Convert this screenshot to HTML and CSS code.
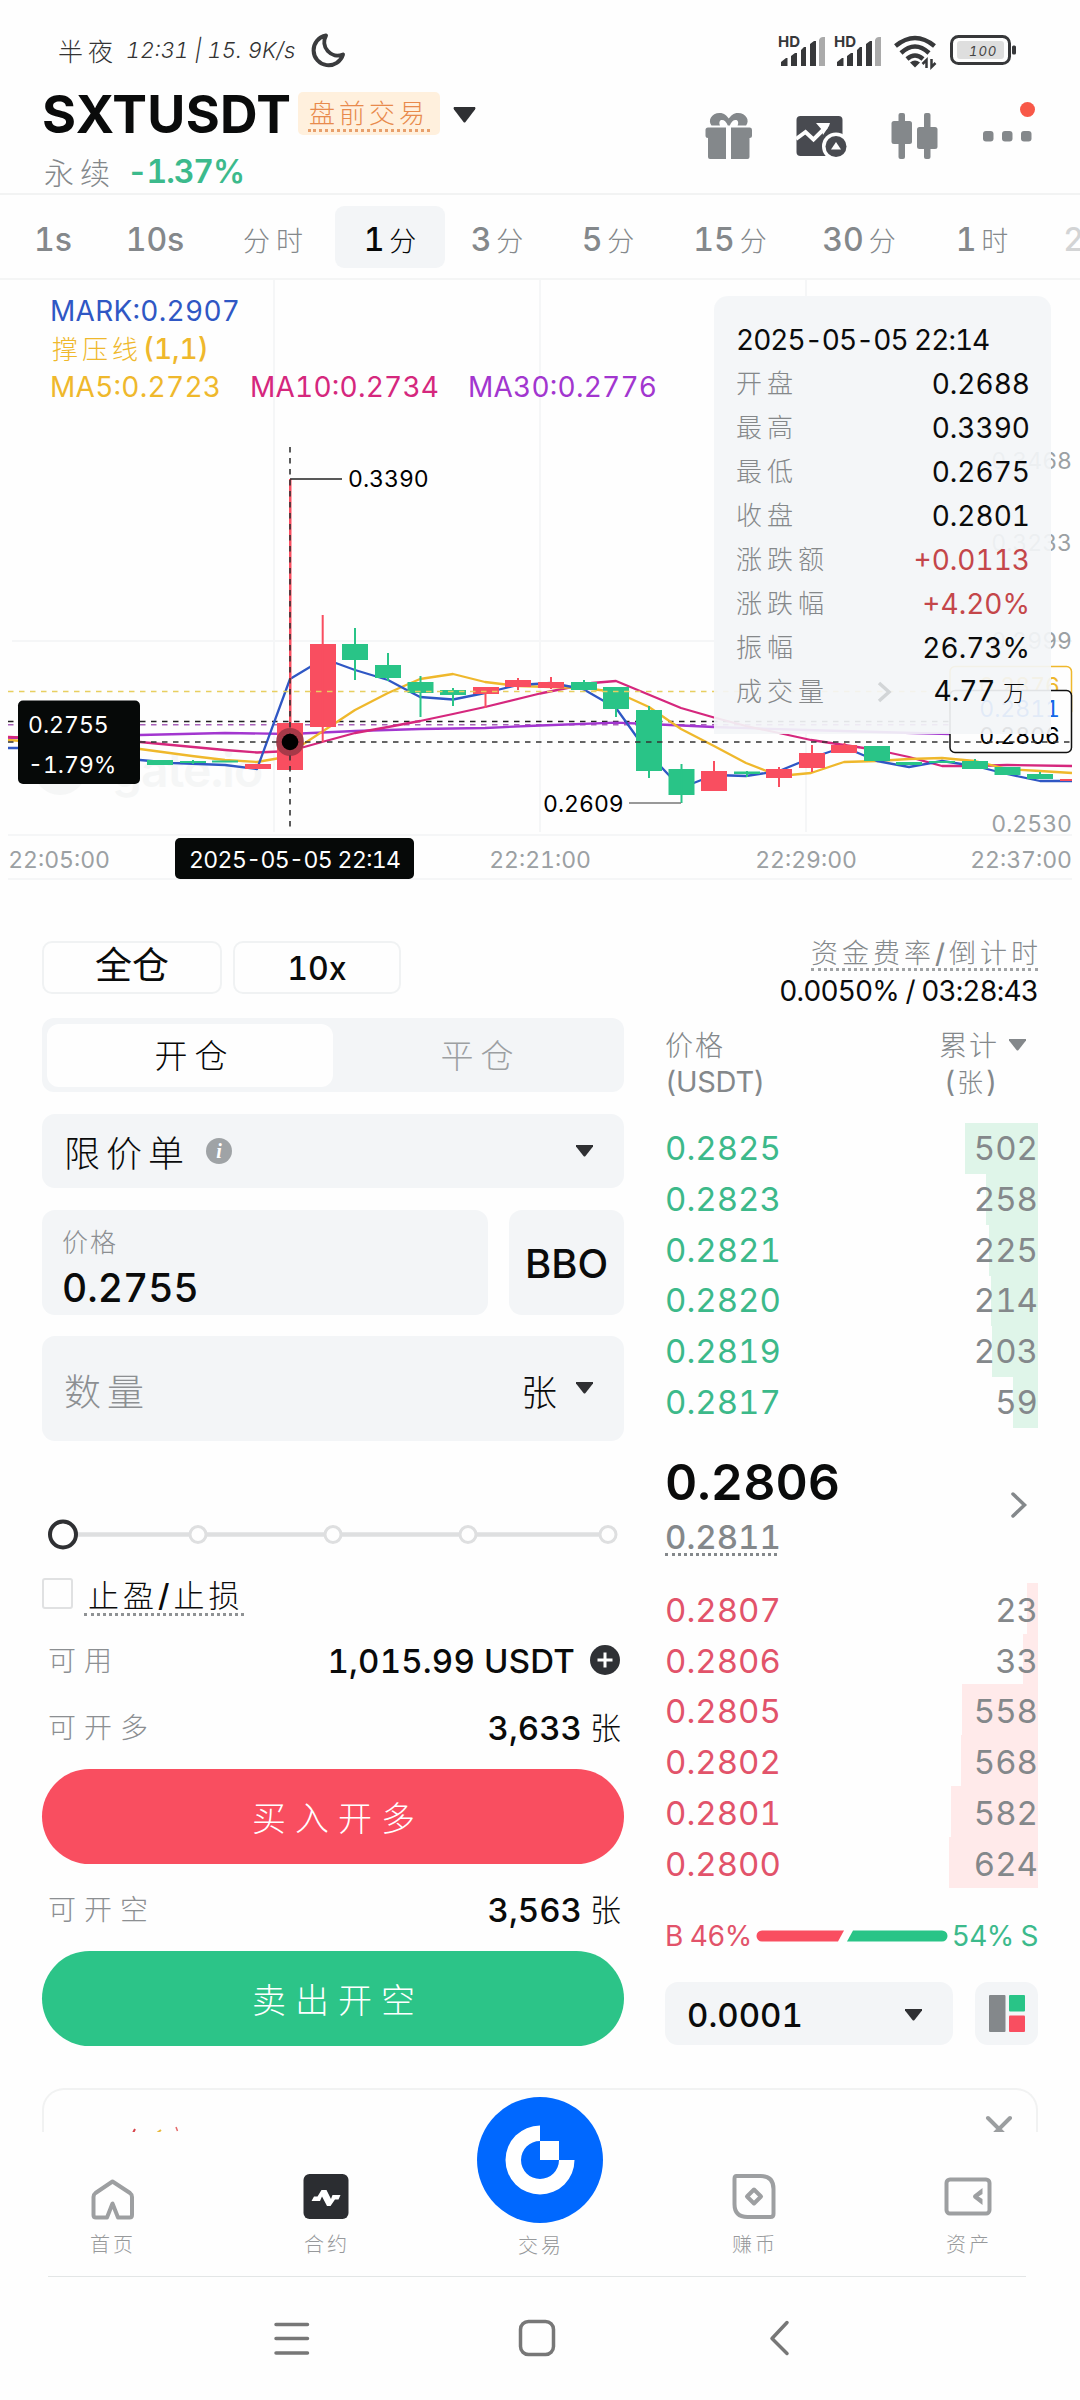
FILE: index.html
```html
<!DOCTYPE html>
<html lang="zh-CN">
<head>
<meta charset="utf-8">
<title>SXTUSDT 永续</title>
<link rel="stylesheet" href="styles.css">
</head>
<body>
<div class="status">
  <span class="status-text">半夜</span><span class="status-time">12:31 | 15. 9K/s</span>
  <svg class="moon" width="36" height="36" viewBox="310 32 36 36"><path d="M326 35.5A15 15 0 1 0 343 54.500A13.500 13.500 0 0 1 326 35.500Z" fill="none" stroke="#3a3b3d" stroke-width="4" stroke-linejoin="round"/></svg>
  <svg class="status-icons" width="250" height="44" viewBox="775 28 250 44">
    <g id="sig" fill="#37383a">
      <text x="778" y="47" class="hd">HD</text>
      <path d="M781 66v-4l5-4h1.500v8zM791 66V56l4-3h2v13zM801 66V50l3-3h2v19zM810 66V44l4-3h2v25z"/>
      <path d="M819 66V40q1-3 4-3h2v29z" fill="#aaa"/>
    </g>
    <use href="#sig" x="56"/>
    <g fill="none" stroke="#37383a" stroke-width="4.500">
      <path d="M895.500 46Q915 30 934.500 46M901 53Q915 40 929 53M907 59Q915 52 923 59"/>
    </g>
    <path d="M910 62.500q5-4 10 0l-5 5z" fill="#37383a"/>
    <path d="M926.500 68v-8l-4 4M931.500 59v8l4-4" stroke="#37383a" stroke-width="2.500" fill="none"/>
    <rect x="951.500" y="36.500" width="58" height="27" rx="7" fill="none" stroke="#37383a" stroke-width="3"/>
    <rect x="957" y="41" width="47" height="18" rx="3" fill="#dedede"/>
    <text x="969" y="55.500" class="bat">100</text>
    <rect x="1012" y="45.500" width="4" height="9" rx="1.500" fill="#37383a"/>
  </svg>
</div>

<header class="head">
  <div>
    <div class="name-row">
      <h1>SXTUSDT</h1>
      <span class="badge"><span>盘前交易</span></span>
      <svg width="23" height="16" viewBox="0 0 23 16"><path d="M1 0h21q1 1 0 2.500L12.500 15q-1 1-2 0L1 2.500Q0 1 1 0z" fill="#2f3033"/></svg>
    </div>
    <div class="sub-row"><span class="perp">永续</span><b>-1.37%</b></div>
  </div>
  <svg class="head-icons" width="345" height="70" viewBox="700 95 345 70">
    <g fill="#84888b">
      <path d="M706 127.500h20V159h-16q-2 0-2-2v-19q-2.500 0-2.500-2.500V130q0-2.500 2.500-2.500zM731 127.500h19q2 0 2 2.500v5.500q0 2.500-2.500 2.500v19q0 2-2 2H731z"/>
      <path d="M711.500 125.500c-4-5 0-12.500 8-12.500 5 0 7 2.500 9.300 5.500 2.300-3 4.300-5.500 9.300-5.500 8 0 12 7.500 8 12.500h-8.500c1.500-3.500 0-5.500-2-5.500-2.500 0-4.500 2-5.800 5.500h-2c-1.300-3.500-3.300-5.500-5.800-5.500-2 0-3.500 2-2 5.500z"/>
      <rect x="891.500" y="121" width="20.500" height="23" rx="2.500"/><rect x="898.500" y="113" width="6.500" height="46" rx="2"/>
      <rect x="917" y="127" width="20.500" height="22" rx="2.500"/><rect x="924" y="113" width="6.500" height="46" rx="2"/>
      <rect x="983" y="131" width="10.500" height="10.500" rx="3"/><rect x="1002" y="131" width="10.500" height="10.500" rx="3"/><rect x="1021" y="131" width="10.500" height="10.500" rx="3"/>
    </g>
    <rect x="796.500" y="116" width="46" height="40" rx="4" fill="#484a50"/>
    <path d="M796 139l9.500-7 8 7.500 13-13" fill="none" stroke="#fefefe" stroke-width="4"/><path d="M816 123h14l-1 3-6 9-1-5z" fill="#fefefe"/>
    <circle cx="836" cy="146.500" r="14" fill="#fefefe"/><circle cx="836" cy="146.500" r="10.500" fill="#484a50"/>
    <path d="M836 142l5 7.500h-10z" fill="#fefefe"/>
    <circle cx="1027.500" cy="109.500" r="7.500" fill="#f85848"/>
  </svg>
</header>

<nav class="tabs">
  <span>1s</span><span>10s</span><span><i class="line">分时</i></span><span class="on">1<i>分</i></span><span>3<i>分</i></span><span>5<i>分</i></span><span>15<i>分</i></span><span>30<i>分</i></span><span>1<i>时</i></span><span class="fade">2</span>
</nav>

<section class="chart">
  <svg width="1080" height="600" viewBox="0 280 1080 600">
    <g stroke="#f5f6f7" stroke-width="2" fill="none">
      <path d="M274 280V832M540 280V832M806 280V832M12 641H1072M8 835H1072M8 879H1072"/>
    </g>
    <g fill="#f5f6f6"><circle cx="60" cy="768" r="27"/><text x="112" y="787" class="mark">gate.io</text></g>
    <g fill="none" stroke-dasharray="5.500 5.500" stroke-width="1.500">
      <path d="M8 721.500H1072" stroke="#222"/><path d="M8 724.800H1072" stroke="#a860b8"/>
    </g>
    <g fill="none" stroke-width="2.300" stroke-linejoin="round">
      <path stroke="#a236cf" d="M8 738L140 735 225 733 290 734 355 731 420 729 485 728 540 725.500 616 722.700 649 724 714 727 806 730 950 734 1072 736"/>
      <path stroke="#d5277d" d="M8 737L140 742 225 750 257 752.500 290 751 322 742 355 733 388 727 420 721 453 714 485 707 540 693.500 592 683 616 681 681 708 714 717.500 746 726 779 733 811 740 844 745 877 750 909 757 942 766 975 766 1007 765 1072 766"/>
      <path stroke="#efb82c" d="M8 740L140 749 192 756 225 760 257 762 280 758 305 743 355 710 388 693 420 679 453 674 485 682 518 686 551 687 583 688 616 692 649 707 681 729 714 746 746 763 779 776 811 773 844 762 877 761 909 759 942 758 975 761 1007 769 1040 771 1072 773"/>
      <path stroke="#2f57c4" d="M8 748H18L140 760 173 763 225 765 257 769 290 679 310 667 322 658 355 670 388 680 420 697 453 699.500 485 693 518 685 551 683 583 689 616 708 649 754 681 788 714 775 746 776 779 771 811 758 844 747 877 761 909 767 942 761 975 766 1007 774 1040 781 1072 781"/>
    </g>
    <g fill="#29c487">
      <path d="M147 760h26v5h-26zM180 761h26v2h-26zM212 760.500h26v2h-26zM342 644h26v16h-26zM375 665h26v13h-26zM407.500 682h26v11h-26zM440 690h26v5h-26zM571 682h26v8h-26zM603 687h26v22h-26zM636 710h26v61h-26zM668.500 769h26v26h-26zM734 771.500h26v2.500h-26zM864 746h26v15h-26zM896 762h26v3h-26zM929 761h26v2h-26zM962 761h26v8h-26zM994.500 767h26v8h-26zM1027 774h26v5h-26z"/>
      <path d="M354 628h2v52h-2zM387 653h2v28h-2zM419.500 676h2v41h-2zM452 688h2v18h-2zM583 680h2v3h-2zM615 705h2v12h-2zM648 706h2v72h-2zM680.500 764h2v39h-2zM192 760h2v4h-2zM746 771h2v6h-2zM974 759h2v4h-2zM1039 772h2v4h-2z"/>
    </g>
    <g fill="#f94e60">
      <path d="M245 764h26v5h-26zM277 723h26v47h-26zM310 644h26v83h-26zM473 687h26v7h-26zM505 680h26v7h-26zM538 682h26v6h-26zM701 771h26v20h-26zM766 769h26v9h-26zM799 753h26v15h-26zM831 745h26v8h-26zM1060 779h12v2h-12z"/>
      <path d="M289 479h2.500v250h-2.500zM321.700 615h2v127h-2zM484.500 690h2v18h-2zM517 678h2v12h-2zM550 677h2v12h-2zM713 761h2v12h-2zM778 767h2v20h-2zM811 745h2v27h-2zM843.500 743h2v4h-2z"/>
    </g>
    <path d="M8 691.500H1072" fill="none" stroke="#e8cf60" stroke-width="1.500" stroke-dasharray="5.500 5.500"/>
    <path d="M290 479H342" stroke="#222" stroke-width="1.500"/><path d="M629 803H681" stroke="#777" stroke-width="1.500"/>
    <g class="axis" text-anchor="end">
      <text x="1072" y="469">0.3468</text><text x="1072" y="551">0.3233</text><text x="1072" y="649">0.2999</text><text x="1072" y="832">0.2530</text>
      <text x="1072" y="868">22:37:00</text><text x="857" y="868">22:29:00</text><text x="591" y="868">22:21:00</text><text x="110" y="868">22:05:00</text>
    </g>
    <g fill="#fefefe"><rect x="950" y="666.500" width="121.500" height="50" rx="5" stroke="#efb82c" stroke-width="1.500"/><text x="1060" y="694" text-anchor="end" class="val" fill="#efb82c">0.2876</text>
    <rect x="950" y="690.500" width="121.500" height="62" rx="5" stroke="#111" stroke-width="1.500"/></g>
    <text x="1060" y="717" text-anchor="end" class="val" fill="#1467e8">0.2811</text><text x="1060" y="744" text-anchor="end" class="val">0.2806</text>
    <path d="M8 742H1072M290 447V831" stroke="#333" stroke-width="1.600" stroke-dasharray="5.500 5.500" fill="none"/>
    <circle cx="290" cy="742" r="14" fill="#8b3340" opacity=".75"/><circle cx="290" cy="742" r="8.300"/>
    <text x="348" y="487" class="val">0.3390</text><text x="543" y="812" class="val">0.2609</text>
    <rect x="18" y="700.500" width="122" height="83.500" rx="5" fill="#060908"/><rect x="175" y="838" width="239" height="41" rx="5" fill="#060908"/>
    <g fill="#fff"><text x="28" y="733" class="val">0.2755</text><text x="28" y="773" class="val">-1.79%</text><text x="189" y="868" class="val" textLength="212">2025-05-05 22:14</text></g>
    <g class="leg">
      <text x="50" y="321" fill="#2f57c4" textLength="190">MARK:0.2907</text>
      <text x="52" y="359" fill="#efb82c" class="sr">撑压线<tspan x="143" class="par">(1,1)</tspan></text>
      <text x="50" y="397" fill="#efb82c" textLength="171">MA5:0.2723</text><text x="250" y="397" fill="#d5277d" textLength="189">MA10:0.2734</text><text x="468" y="397" fill="#a236cf" textLength="189">MA30:0.2776</text>
    </g>
  </svg>
  <div class="tip">
    <div class="tip-date">2025-05-05 22:14</div>
    <div><i>开盘</i><span>0.2688</span></div>
    <div><i>最高</i><span>0.3390</span></div>
    <div><i>最低</i><span>0.2675</span></div>
    <div><i>收盘</i><span>0.2801</span></div>
    <div><i>涨跌额</i><span class="up">+0.0113</span></div>
    <div><i>涨跌幅</i><span class="up">+4.20%</span></div>
    <div><i>振幅</i><span>26.73%</span></div>
    <div><i class="vol">成交量</i><svg width="16" height="22" viewBox="0 0 16 22"><path d="M3 2l10 9-10 9" fill="none" stroke="#d2d5d7" stroke-width="3.500"/></svg><span class="last">4.77 <em>万</em></span></div>
  </div>
</section>

<main class="trade">
  <section class="form">
    <div class="chips"><span class="cross">全仓</span><span class="lev">10x</span></div>
    <div class="seg"><span class="on">开仓</span><span>平仓</span></div>
    <div class="field select"><span class="lg">限价单</span><span class="info">i</span><svg class="caret" width="17" height="12" viewBox="0 0 17 12"><path d="M0 0h17v1.500L9.500 11q-1 1-2 0L0 1.500z"/></svg></div>
    <div class="price-row">
      <div class="field price"><span class="lbl">价格</span><span class="num">0.2755</span></div>
      <div class="field bbo">BBO</div>
    </div>
    <div class="field qty"><span class="ph">数量</span><span class="unit">张</span><svg class="caret" width="17" height="12" viewBox="0 0 17 12"><path d="M0 0h17v1.500L9.500 11q-1 1-2 0L0 1.500z"/></svg></div>
    <svg class="slider" width="582" height="36" viewBox="42 1516 582 36">
      <path d="M70 1534.500H606" stroke="#dedfe0" stroke-width="4.500"/>
      <g fill="#fefefe" stroke="#dedfe0" stroke-width="3"><circle cx="198" cy="1534.500" r="8"/><circle cx="333" cy="1534.500" r="8"/><circle cx="468" cy="1534.500" r="8"/><circle cx="608" cy="1534.500" r="8"/></g>
      <circle cx="63" cy="1534.500" r="13" fill="#fefefe" stroke="#2f3033" stroke-width="4"/>
    </svg>
    <div class="tpsl"><span class="box"></span><span class="dotted">止盈<b>/</b>止损</span></div>
    <div class="row avail"><i>可用</i><span class="amt">1,015.99 USDT</span><svg width="32" height="32" viewBox="0 0 32 32"><circle cx="16" cy="15" r="15" fill="#2f3135"/><path d="M16 7.500v15M8.500 15h15" stroke="#fff" stroke-width="3"/></svg></div>
    <div class="row max"><i>可开多</i><span>3,633</span><em>张</em></div>
    <button class="buy">买入开多</button>
    <div class="row max2"><i>可开空</i><span>3,563</span><em>张</em></div>
    <button class="sell">卖出开空</button>
  </section>

  <section class="book">
    <div class="fund"><span>资金费率<b>/</b>倒计时</span></div>
    <div class="fund-val">0.0050% / 03:28:43</div>
    <div class="cols"><div><i>价格</i><br>(USDT)</div><div class="acc"><i>累计</i><svg width="17" height="12" viewBox="0 0 17 12"><path d="M0 0h17v1.500L9.500 11q-1 1-2 0L0 1.500z" fill="#84888b"/></svg><br><span>(<i class="zh">张</i>)</span></div></div>
    <div class="rows green">
      <div><span>0.2825</span><s style="width:73px"></s><span>502</span></div>
      <div><span>0.2823</span><s style="width:52px"></s><span>258</span></div>
      <div><span>0.2821</span><s style="width:49px"></s><span>225</span></div>
      <div><span>0.2820</span><s style="width:47px"></s><span>214</span></div>
      <div><span>0.2819</span><s style="width:46px"></s><span>203</span></div>
      <div><span>0.2817</span><s style="width:25px"></s><span>59</span></div>
    </div>
    <div class="mid"><div><div class="last-price">0.2806</div><span class="idx">0.2811</span></div>
      <svg width="18" height="28" viewBox="0 0 18 28"><path d="M3 3l11.500 11L3 25" fill="none" stroke="#84888b" stroke-width="3.500" stroke-linecap="round"/></svg></div>
    <div class="rows red">
      <div><span>0.2807</span><s style="width:11px"></s><span>23</span></div>
      <div><span>0.2806</span><s style="width:15px"></s><span>33</span></div>
      <div><span>0.2805</span><s style="width:76px"></s><span>558</span></div>
      <div><span>0.2802</span><s style="width:77px"></s><span>568</span></div>
      <div><span>0.2801</span><s style="width:87px"></s><span>582</span></div>
      <div><span>0.2800</span><s style="width:89px"></s><span>624</span></div>
    </div>
    <div class="ratio"><span class="r">B 46%</span><svg width="192" height="12" viewBox="0 0 192 12"><path d="M6 .5H88L82 11.500H6A5.500 5.500 0 0 1 6 .5z" fill="#f94e60"/><path d="M97 .5H186a5.500 5.500 0 0 1 0 11H91z" fill="#29c487"/></svg><span class="g">54% S</span></div>
    <div class="prec"><div class="field step">0.0001<svg class="caret" width="17" height="12" viewBox="0 0 17 12"><path d="M0 0h17v1.500L9.500 11q-1 1-2 0L0 1.500z"/></svg></div>
      <div class="field lay"><svg width="36" height="37" viewBox="0 0 36 37"><rect width="16.500" height="37" rx="1" fill="#84888b"/><rect x="20" width="16" height="16.500" rx="1" fill="#29c487"/><rect x="20" y="20.500" width="16" height="16.500" rx="1" fill="#f94e60"/></svg></div></div>
  </section>
</main>

<div class="sheet">
  <svg width="996" height="44" viewBox="42 2088 996 44"><path d="M132.500 2134l2.500-5" stroke="#d8434a" stroke-width="2"/><path d="M157 2133l4-3" stroke="#e9b93d" stroke-width="2"/><path d="M176 2127l1.500 4" stroke="#e56a6a" stroke-width="1.500"/><path d="M988 2118l24 24M1010 2118l-24 24" stroke="#9b9ea0" stroke-width="4" stroke-linecap="round"/></svg>
</div>

<nav class="bottom">
  <div><svg width="48" height="48" viewBox="87 2173 48 48"><path d="M111.500 2181.500L129 2193q2 1.500 2 4v18q0 2.500-2.500 2.500H117l-5.500-14-5.500 14H95q-2.500 0-2.500-2.500v-18q0-2.500 2-4z" fill="none" stroke="#9d9fa1" stroke-width="4" stroke-linejoin="round"/></svg><i>首页</i></div>
  <div><svg width="48" height="48" viewBox="301.500 2173 48 48"><rect x="303" y="2174" width="45" height="45" rx="6" fill="#2b2d31"/><path d="M311 2201l2.500-4.500h3.500l4-6.500h5l4.500 9 1.500-4h8l-2 4.500h-3.500l-4.500 6.500h-3.500l-5-9.500-2 4.500z" fill="#fff"/></svg><i>合约</i></div>
  <div class="center"><svg class="fab" width="126" height="126" viewBox="-63 -63 126 126"><circle r="63" fill="#0068ff"/><path d="M0-34.500A34.500 34.500 0 1 0 34.500 0H19A19 19 0 1 1 0-19z" fill="#fff"/><rect y="-19" width="19" height="19" fill="#fff"/></svg><i>交易</i></div>
  <div><svg width="48" height="48" viewBox="729.500 2173 48 48"><path d="M736 2176h24q13 0 13 13v25q0 3-3 3h-23q-13 0-13-13v-25q0-3 2-3z" fill="none" stroke="#9d9fa1" stroke-width="4"/><path d="M753.500 2189.500l7 7-7 7-7-7z" fill="none" stroke="#9d9fa1" stroke-width="4" stroke-linejoin="round"/></svg><i>赚币</i></div>
  <div><svg width="48" height="48" viewBox="943.500 2173 48 48"><rect x="946" y="2179.500" width="43" height="34" rx="3.500" fill="none" stroke="#9d9fa1" stroke-width="4"/><path d="M982 2188v6l-4 2.500 4 2.500v6l-9-7q-1-1.500 0-3z" fill="#9d9fa1"/></svg><i>资产</i></div>
</nav>

<div class="sys">
  <svg width="1080" height="60" viewBox="0 2308 1080 60" fill="none" stroke="#777" stroke-width="3.500" stroke-linecap="round" stroke-linejoin="round"><path d="M276 2324.500H307.500M276 2338.500H307.500M276 2353H307.500"/><rect x="520.500" y="2321.500" width="33" height="33" rx="8"/><path d="M787 2322.500L772 2338.500 787 2353.500"/></svg>
</div>
</body>
</html>
```
FILE: styles.css
```css
* { box-sizing: border-box; }
body {
  margin: 0; width: 1080px; height: 2400px; overflow: hidden;
  background: #fefefe; color: #0a0b0b;
  font-family: Inter, "Noto Sans CJK SC", sans-serif;
  font-feature-settings: "tnum";
}
svg { display: block; flex: none; }
i, em { font-style: normal; font-weight: 300; }

.status { height: 78px; padding: 22px 55px 0 58px; display: flex; align-items: center; color: #333; }
.status-text { font-size: 25px; font-weight: 300; letter-spacing: 5px; }
.status-time { font-size: 22px; font-weight: 300; font-style: italic; width: 184px; white-space: nowrap; margin-left: 8px; }
.moon { margin-left: 0; }
.status-icons { margin-left: auto; }
.hd { font-size: 15px; font-weight: 700; }
.bat { font-size: 13px; font-style: italic; letter-spacing: 1px; fill: #444; }

.head { height: 117px; padding: 12px 35px 0 42px; border-bottom: 2px solid #f2f3f3; display: flex; justify-content: space-between; }
.head-icons { margin-top: 5px; }
.name-row { display: flex; align-items: center; height: 50px; }
.name-row h1 { margin: 0; font-size: 52px; font-weight: 700; line-height: 50px; width: 256px; letter-spacing: 0.3px; }
.badge { width: 142px; height: 43px; margin-right: 13px; border-radius: 5px; background: #fff0dd; color: #e88a4c; padding: 6px 10px 0; text-align: center; margin-top: -4px; }
.badge span { display: block; font-size: 26px; font-weight: 300; letter-spacing: 4px; line-height: 31px; border-bottom: 3px dotted #e8a06c; white-space: nowrap; }
.sub-row { display: flex; align-items: center; height: 38px; margin-top: 12px; color: #84888b; }
.perp { font-size: 30px; font-weight: 300; letter-spacing: 6px; width: 85px; padding-left: 2px; }
.sub-row b { font-size: 32px; font-weight: 600; color: #3cba8c; letter-spacing: -1.1px; }

.tabs { height: 85px; border-bottom: 2px solid #f4f5f5; display: grid; grid-template-columns: 92px 112px 128px 102px 112px 110px 134px 124px 122px 37px; padding: 11px 0 12px 7px; font-size: 32px; font-weight: 500; color: #84888b; text-align: center; line-height: 68px; }
.tabs i { font-size: 27px; margin-left: 5px; }
.tabs .line { letter-spacing: 6px; margin-left: 2px; }
.tabs .on { margin: 0 -4px; height: 62px; background: #f3f5f7; border-radius: 9px; color: #060707; }
.tabs .fade { opacity: .35; text-align: right; margin-right: -4px; overflow: hidden; }

.chart { position: relative; height: 600px; }
.chart text { font-size: 23px; }
.chart .axis text { fill: #9ba0a3; }
.chart .mark { font-size: 48px; font-weight: 600; letter-spacing: -1px; }
.chart .leg text { font-size: 28px; }
.chart .leg .sr { font-size: 26px; font-weight: 300; letter-spacing: 4px; }
.chart .leg .par { font-size: 28px; font-weight: 500; letter-spacing: 0; }
.tip { position: absolute; left: 714px; top: 16px; width: 337px; height: 438px; padding: 22px 21px 0 22px; border-radius: 14px 14px 0 0; background: rgba(243, 245, 247, .92); font-size: 28px; }
.tip div { display: flex; align-items: center; height: 44px; line-height: 44px; }
.tip .tip-date { white-space: nowrap; letter-spacing: -1px; }
.tip i { font-size: 26px; letter-spacing: 5px; color: #85888a; }
.tip span { margin-left: auto; }
.tip .up { color: #c4464a; }
.tip svg { margin-left: 47px; }
.tip em { font-size: 22px; margin-right: 5px; }

.trade { height: 1166px; padding: 0 42px; display: flex; justify-content: space-between; }
.form { width: 582px; padding-top: 61px; }
.chips { display: flex; gap: 11px; height: 53px; }
.chips span { border: 2px solid #f0f2f3; border-radius: 10px; text-align: center; line-height: 52px; }
.chips .cross { width: 180px; font-size: 37px; line-height: 46px; }
.lev { width: 168px; font-size: 32px; font-weight: 500; }
.seg { margin-top: 24px; height: 74px; padding: 6px 5px 5px; border-radius: 12px; background: #f3f5f7; display: flex; font-size: 33px; letter-spacing: 7px; font-weight: 300; text-align: center; line-height: 65px; color: #9c9fa2; }
.seg span { flex: 1; padding-left: 9px; }
.seg .on { background: #fefefe; border-radius: 12px; color: #060707; }
.field { background: #f3f5f7; border-radius: 13px; display: flex; align-items: center; }
.caret { fill: #2f3033; margin-left: auto; }
.select { margin-top: 22px; height: 74px; padding: 0 31px 0 22px; }
.lg { font-size: 36px; font-weight: 300; letter-spacing: 6px; }
.info { width: 26px; height: 26px; margin-left: 16px; border-radius: 50%; background: #9fa3a6; color: #fff; font: italic bold 20px/26px "Liberation Serif", serif; text-align: center; }
.price-row { margin-top: 22px; display: flex; justify-content: space-between; height: 105px; }
.price { width: 446px; padding: 0 20px; flex-direction: column; align-items: flex-start; }
.lbl { font-size: 26px; font-weight: 300; color: #8c8f92; line-height: 36px; margin-top: 15px; letter-spacing: 2px; }
.num { font-size: 39px; font-weight: 500; line-height: 40px; margin-top: 7px; }
.bbo { width: 115px; justify-content: center; font-size: 40px; font-weight: 500; padding-top: 2px; }
.qty { margin-top: 21px; height: 105px; padding: 3px 31px 0 22px; }
.ph { font-size: 37px; font-weight: 300; letter-spacing: 6px; color: #8c8f92; }
.unit { margin-left: auto; font-size: 36px; font-weight: 300; }
.qty .caret { margin-left: 19px; margin-top: -4px; }
.slider { margin-top: 75px; }
.tpsl { margin-top: 25px; display: flex; height: 39px; }
.box { width: 31px; height: 31px; margin: 1px 11px 0 0; border: 2.5px solid #e0e1e2; border-radius: 3px; }
.dotted { font-size: 31px; font-weight: 300; letter-spacing: 4px; line-height: 38px; width: 160px; padding-left: 4px; border-bottom: 3px dotted #8f9294; white-space: nowrap; }
.dotted b { font-weight: 500; }
.row { display: flex; align-items: center; height: 40px; padding: 0 3px 0 6px; line-height: 40px; }
.row i { font-size: 28px; letter-spacing: 8px; color: #8c8f92; margin-right: auto; }
.row em { font-size: 31px; margin-left: 8px; }
.row span { font-size: 33px; font-weight: 500; }
.avail { margin-top: 25px; }
.row .amt { letter-spacing: 0.2px; }
.row.avail svg { margin-left: 14px; }
.max { margin-top: 27px; }
.max2 { margin-top: 26px; }
button { display: block; width: 582px; height: 95px; margin-top: 21px; padding: 0 0 0 10px; border: 0; border-radius: 48px; color: #fff; font: 300 34px Inter, "Noto Sans CJK SC", sans-serif; letter-spacing: 9px; }
.buy { background: #f94e60; }
.sell { background: #2cc488; }

.book { width: 373px; padding-top: 58px; }
.fund { display: flex; justify-content: flex-end; }
.fund span { width: 227px; font-size: 27px; font-weight: 300; color: #84888b; letter-spacing: 4px; line-height: 32px; height: 33px; border-bottom: 3px dotted #a0a3a5; white-space: nowrap; text-align: right; }
.fund b { font-weight: 500; }
.fund-val { margin-top: 5px; text-align: right; font-size: 28px; line-height: 30px; white-space: nowrap; letter-spacing: -0.9px; }
.cols { margin-top: 22px; display: flex; justify-content: space-between; font-size: 29px; line-height: 36px; color: #84888b; height: 74px; letter-spacing: -0.3px; }
.cols i { font-size: 28px; letter-spacing: 2px; }
.acc { width: 99px; }
.acc svg { display: inline-block; margin-left: 10px; vertical-align: 5px; }
.acc > span { margin-left: 5px; }
.cols .zh { font-size: 26px; letter-spacing: 3px; margin-left: 2px; }
.rows { margin-top: 21px; }
.rows div { position: relative; display: flex; justify-content: space-between; height: 50.8px; line-height: 51.5px; font-size: 33px; color: #84888b; }
.rows span:first-child { color: #3cb98a; }
.rows.red span:first-child { color: #e2536a; }
.rows span { position: relative; z-index: 1; }
.rows s { position: absolute; right: 0; top: 0; height: 51px; background: #dff5e9; }
.red s { background: #ffeaea; }
.rows.red div { line-height: 54px; }
.mid { display: flex; justify-content: space-between; align-items: center; margin-top: 29px; height: 100px; padding-right: 10px; }
.mid svg { margin-top: -3px; }
.last-price { font-size: 50px; font-weight: 600; line-height: 50px; }
.idx { display: block; width: 112px; margin-top: 15px; font-size: 33px; font-weight: 500; line-height: 31px; color: #84888b; border-bottom: 3px dotted #84888b; }
.mid + .rows { margin-top: 26px; }
.ratio { margin-top: 31px; height: 34px; display: flex; align-items: center; justify-content: space-between; font-size: 28px; line-height: 34px; white-space: nowrap; letter-spacing: -0.6px; }
.r { color: #e2536a; }
.g { color: #3cba8c; }
.prec { margin-top: 29px; display: flex; justify-content: space-between; }
.step { width: 288px; height: 63px; padding: 3px 31px 0 22px; font-size: 33px; font-weight: 500; }
.lay { width: 63px; justify-content: center; }

.sheet { margin: 42px 42px 0; height: 44px; border: 2.5px solid #f1f2f2; border-bottom: 0; border-radius: 22px 22px 0 0; overflow: hidden; }
.sheet svg { margin: -2.5px; }
.bottom { position: relative; height: 145px; margin: 0 5px; display: grid; grid-template-columns: repeat(5, 1fr); }
.bottom::after { content: ""; position: absolute; left: 43px; right: 49px; bottom: 0; height: 1.500px; background: #e3e6e6; }
.bottom div { display: flex; flex-direction: column; align-items: center; padding-top: 41px; }
.bottom i { font-size: 20px; letter-spacing: 3px; color: #97999b; line-height: 24px; margin-top: 12px; padding-left: 2px; }
.center { position: relative; }
.fab { position: absolute; top: -35px; }
.bottom .center { padding-top: 89px; }
.bottom .center i { margin-top: 13px; }
.sys { padding-top: 31px; }
```
